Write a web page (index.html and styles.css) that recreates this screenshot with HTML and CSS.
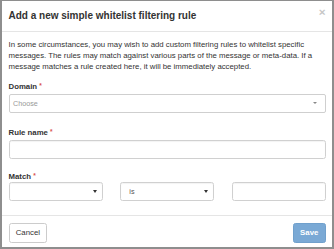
FILE: index.html
```html
<!DOCTYPE html>
<html lang="en">
<head>
<meta charset="utf-8">
<title>Add a new simple whitelist filtering rule</title>
<link rel="stylesheet" href="styles.css">
</head>
<body>
<div class="modal">
  <div class="modal-header">
    <h4 class="modal-title">Add a new simple whitelist filtering rule</h4>
    <button class="close" type="button">×</button>
  </div>
  <div class="modal-body">
    <p class="intro">In some circumstances, you may wish to add custom filtering rules to whitelist specific messages. The rules may match against various parts of the message or meta-data. If a message matches a rule created here, it will be immediately accepted.</p>
    <div class="form-group group-domain">
      <label class="field-label">Domain <span class="req">*</span></label>
      <div class="select2-box">
        <span class="placeholder">Choose</span>
        <span class="s2-arrow"></span>
      </div>
    </div>
    <div class="form-group group-name">
      <label class="field-label">Rule name <span class="req">*</span></label>
      <div class="text-input"></div>
    </div>
    <div class="form-group group-match">
      <label class="field-label">Match <span class="req">*</span></label>
      <div class="match-row">
        <div class="select-box"><span class="select-value"></span><span class="caret"></span></div>
        <div class="select-box"><span class="select-value">is</span><span class="caret"></span></div>
        <div class="text-input"></div>
      </div>
    </div>
  </div>
  <div class="modal-footer">
    <button class="btn btn-default" type="button">Cancel</button>
    <button class="btn btn-primary" type="button">Save</button>
  </div>
</div>
</body>
</html>
```

FILE: styles.css
```css
* {
  box-sizing: border-box;
}

html, body {
  margin: 0;
  padding: 0;
  width: 334px;
  height: 249px;
  overflow: hidden;
  background: #ffffff;
}

body {
  font-family: "Liberation Sans", Arial, sans-serif;
  font-size: 7.8px;
  color: #333333;
}

.modal {
  width: 334px;
  height: 249px;
  border: 2px solid #8e8e8e;
  border-top-width: 1px;
  background: #ffffff;
  display: flex;
  flex-direction: column;
}

.modal-header {
  height: 31px;
  padding: 0 6.5px;
  border-bottom: 1px solid #e5e5e5;
  display: flex;
  justify-content: space-between;
  align-items: center;
}

.modal-title {
  margin: 0;
  font-size: 10px;
  line-height: 14px;
  font-weight: bold;
  color: #333333;
}

.close {
  align-self: flex-start;
  margin-top: 5px;
  padding: 0;
  border: 0;
  background: transparent;
  font-family: "Liberation Sans", Arial, sans-serif;
  font-size: 11.7px;
  line-height: 12px;
  font-weight: bold;
  color: #c6c6c6;
}

.modal-body {
  padding: 7px 6.5px 0;
  height: 183px;
}

.intro {
  margin: 0 0 7.8px;
  line-height: 11.2px;
}

.form-group {
  margin: 0;
}

.group-domain {
  margin-bottom: 13.5px;
}

.group-name {
  margin-bottom: 11px;
}

.field-label {
  display: block;
  font-weight: bold;
  line-height: 11px;
  margin-bottom: 1.5px;
}

.group-match .field-label {
  margin-bottom: 0.5px;
}

.req {
  color: #d9534f;
  font-size: 6.5px;
  vertical-align: 1px;
}

.select2-box {
  height: 19px;
  border: 1px solid #cfcfcf;
  border-radius: 2px;
  padding: 0 8px 0 3.5px;
  display: flex;
  align-items: center;
  justify-content: space-between;
}

.placeholder {
  color: #999999;
  font-size: 7.2px;
}

.s2-arrow {
  width: 0;
  height: 0;
  border-style: solid;
  border-width: 2.8px 2.2px 0 2.2px;
  border-color: #888888 transparent transparent transparent;
}

.text-input {
  height: 19px;
  border: 1px solid #d0d0d0;
  border-radius: 2.5px;
  box-shadow: inset 0 1px 1px rgba(0, 0, 0, 0.05);
}

.match-row {
  display: grid;
  grid-template-columns: 1fr 1fr 1fr;
  column-gap: 17.5px;
}

.select-box {
  height: 19px;
  border: 1px solid #d0d0d0;
  border-radius: 2.5px;
  box-shadow: inset 0 1px 1px rgba(0, 0, 0, 0.05);
  padding: 0 5px 0 8.3px;
  display: flex;
  align-items: center;
  justify-content: space-between;
}

.select-value {
  color: #555555;
  font-size: 7.2px;
}

.caret {
  width: 0;
  height: 0;
  border-style: solid;
  border-width: 3px 2px 0 2px;
  border-color: #333333 transparent transparent transparent;
}

.modal-footer {
  border-top: 1px solid #e5e5e5;
  padding: 7px 6.5px 4px;
  display: flex;
  justify-content: space-between;
  align-items: flex-start;
}

.btn {
  height: 20px;
  padding: 0 6.2px;
  border-radius: 2.5px;
  font-family: "Liberation Sans", Arial, sans-serif;
  font-size: 7.8px;
  line-height: 18px;
}

.btn-default {
  background: #ffffff;
  border: 1px solid #cccccc;
  color: #333333;
}

.btn-primary {
  background: #7aa9d5;
  border: 1px solid #70a0cc;
  color: #ffffff;
  font-weight: bold;
}
```
